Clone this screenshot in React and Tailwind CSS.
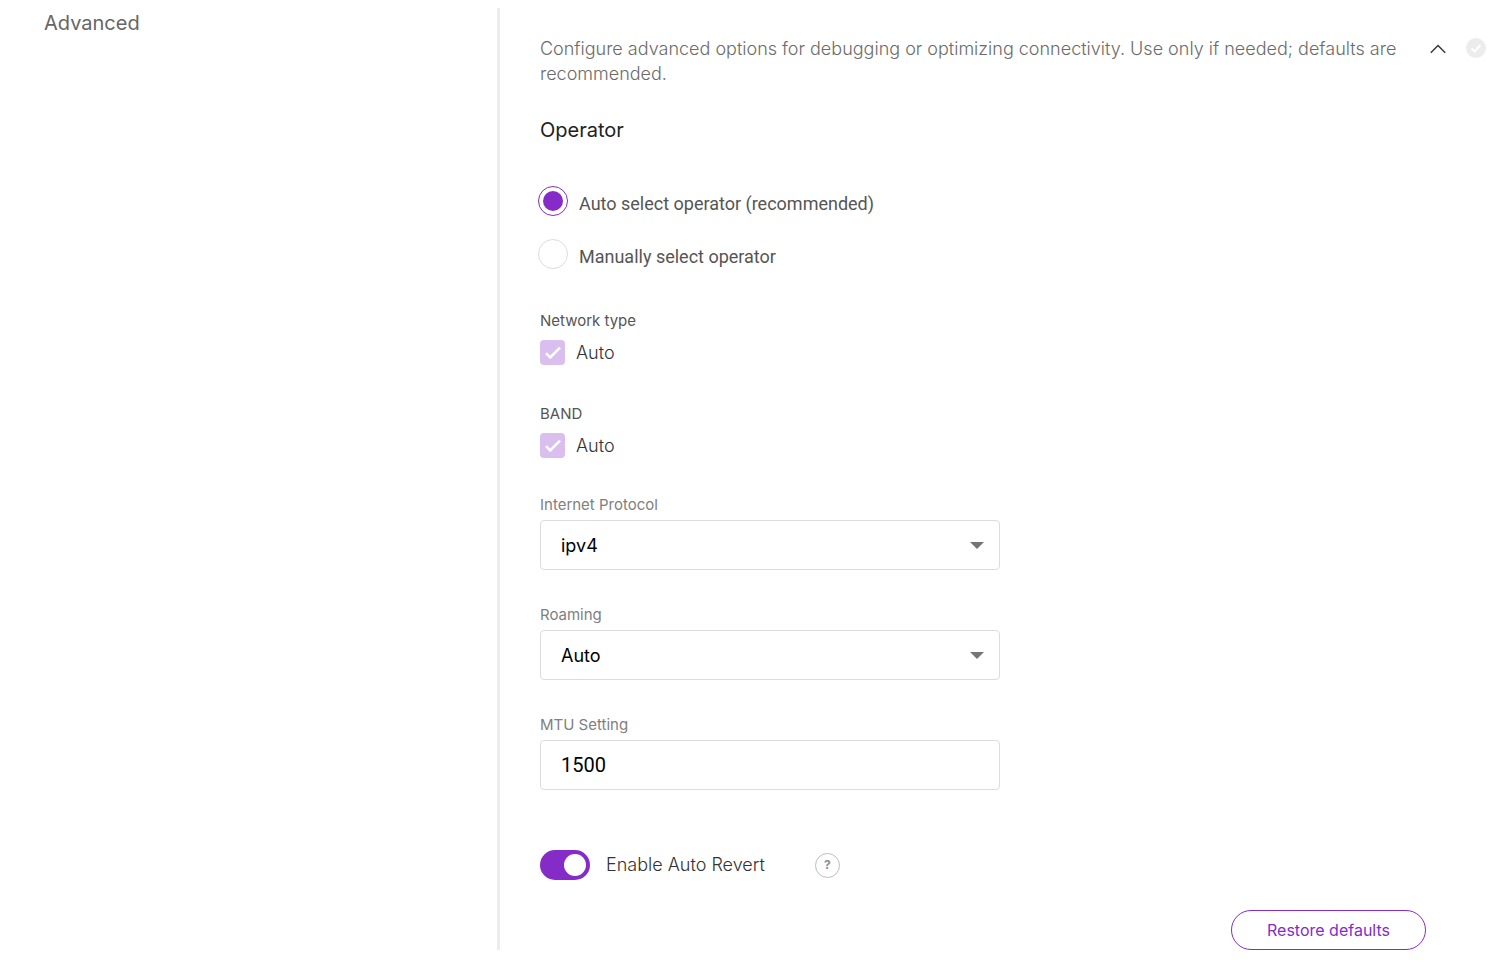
import { useState } from "react";

function RadioOption({ id, label, checked, onChange }) {
    return (
        <div className="flex items-end gap-[11px]">
            <input
                type="radio"
                id={id}
                name="operator"
                checked={checked}
                onChange={onChange}
                className="h-[30px] w-[30px] shrink-0 appearance-none rounded-full border border-[#dcdcdc] bg-white bg-clip-content p-1 checked:border-[#852bc8] checked:bg-[#852bc8]"
            />
            <label htmlFor={id} className="font-[Roboto,sans-serif] text-[18px] leading-6 text-[#555555]">
                {label}
            </label>
        </div>
    );
}

function AutoCheckbox({ id, title }) {
    return (
        <fieldset>
            <legend className="text-[15px] leading-[22px] text-[#555555]">{title}</legend>
            <div className="mt-2 flex items-center gap-[11px]">
                <div className="relative h-[25px] w-[25px]">
                    <input
                        type="checkbox"
                        id={id}
                        defaultChecked
                        disabled
                        className="block h-[25px] w-[25px] appearance-none rounded bg-[#dabfee]"
                    />
                    <svg
                        className="pointer-events-none absolute inset-0"
                        width="25"
                        height="25"
                        viewBox="0 0 25 25"
                        fill="none"
                        stroke="white"
                        strokeWidth="2.6"
                    >
                        <path d="M6 13.2l4.2 4.2L20 7.6" />
                    </svg>
                </div>
                <label htmlFor={id} className="text-[18px] leading-[25px] font-light text-[#333333]">
                    Auto
                </label>
            </div>
        </fieldset>
    );
}

function SelectField({ id, label, options }) {
    return (
        <div className="max-w-[460px]">
            <label htmlFor={id} className="block text-[15px] leading-[30px] text-[#808080]">
                {label}
            </label>
            <div className="relative">
                <select
                    id={id}
                    className="block h-[50px] w-full appearance-none rounded border border-[#dcdcdc] bg-white px-5 text-[18px] text-black"
                >
                    {options.map((option) => (
                        <option key={option}>{option}</option>
                    ))}
                </select>
                <svg
                    className="pointer-events-none absolute top-[22px] right-4"
                    width="14"
                    height="7"
                    viewBox="0 0 14 7"
                    fill="#757575"
                >
                    <path d="M0 0h14L7 7z" />
                </svg>
            </div>
        </div>
    );
}

export default function App() {
    const [operator, setOperator] = useState("auto");
    const [open, setOpen] = useState(true);

    return (
        <main className="flex bg-white pt-2 font-[Inter,sans-serif]">
            <div className="w-[33.4%] shrink-0 border-r-3 border-[#ececec] pl-11">
                <h2 className="text-[20px] leading-[30px] text-[#666666]">Advanced</h2>
            </div>

            <div className="flex min-w-0 flex-1 items-start pt-7 pl-10">
                <section className="min-w-0 flex-1">
                    <p className="text-[18px] leading-[25px] font-light text-[#6b6b6b]">
                        Configure advanced options for debugging or optimizing connectivity. Use only if needed; defaults are
                        recommended.
                    </p>

                    {open && (
                        <>
                            <h3 className="mt-[29px] text-[20px] leading-[30px] text-[#212121]">Operator</h3>

                            {/* Operator mode */}
                            <div className="-ml-0.5 mt-[41px] flex flex-col gap-[23px]">
                                <RadioOption
                                    id="operator-auto"
                                    label="Auto select operator (recommended)"
                                    checked={operator === "auto"}
                                    onChange={() => setOperator("auto")}
                                />
                                <RadioOption
                                    id="operator-manual"
                                    label="Manually select operator"
                                    checked={operator === "manual"}
                                    onChange={() => setOperator("manual")}
                                />
                            </div>

                            <div className="mt-[41px] flex flex-col gap-[38px]">
                                <AutoCheckbox id="network-type" title="Network type" />
                                <AutoCheckbox id="band" title="BAND" />
                            </div>

                            <div className="mt-8 flex flex-col gap-[30px]">
                                <SelectField id="protocol" label="Internet Protocol" options={["ipv4", "ipv6", "ipv4v6"]} />
                                <SelectField id="roaming" label="Roaming" options={["Auto", "On", "Off"]} />
                                <div className="max-w-[460px]">
                                    <label htmlFor="mtu" className="block text-[15px] leading-[30px] text-[#808080]">
                                        MTU Setting
                                    </label>
                                    <input
                                        id="mtu"
                                        type="text"
                                        defaultValue="1500"
                                        className="block h-[50px] w-full rounded border border-[#dcdcdc] px-5 font-[Roboto,sans-serif] text-[20px] text-black"
                                    />
                                </div>
                            </div>

                            {/* Auto revert */}
                            <div className="mt-[60px] flex items-center">
                                <input
                                    type="checkbox"
                                    role="switch"
                                    id="auto-revert"
                                    defaultChecked
                                    className="h-[30px] w-[50px] appearance-none rounded-full bg-gray-300 px-[3px] py-1 before:block before:h-[22px] before:w-[22px] before:rounded-full before:bg-white checked:bg-[#852bc8] checked:before:ml-[21px]"
                                />
                                <label
                                    htmlFor="auto-revert"
                                    className="ml-4 text-[18px] leading-[30px] font-light text-[#333333]"
                                >
                                    Enable Auto Revert
                                </label>
                                <button
                                    type="button"
                                    aria-label="Help"
                                    className="ml-[50px] h-[25px] w-[25px] rounded-full border border-[#bdbdbd] text-[12px] leading-5 font-bold text-[#8c8c8c]"
                                >
                                    ?
                                </button>
                            </div>

                            <div className="mt-[30px] flex justify-end">
                                <button
                                    type="button"
                                    className="h-10 w-[195px] rounded-full border border-[#852bc8] text-[16px] text-[#852bc8]"
                                >
                                    Restore defaults
                                </button>
                            </div>
                        </>
                    )}
                </section>

                <div className="mt-0.5 mr-[11px] ml-1 flex items-center gap-5">
                    <button type="button" aria-label="Toggle section" aria-expanded={open} onClick={() => setOpen(!open)}>
                        <svg width="16" height="20" viewBox="0 0 16 20" fill="none" stroke="#333333" strokeWidth="1.4">
                            <path d="M.8 14.8L8 7.6l7.2 7.2" />
                        </svg>
                    </button>
                    <svg width="20" height="20" viewBox="0 0 20 20" fill="none">
                        <circle cx="10" cy="10" r="10" fill="#ececec" />
                        <path d="M5.5 10.5l3 3 6-6.5" stroke="white" strokeWidth="2.2" />
                    </svg>
                </div>
            </div>
        </main>
    );
}
